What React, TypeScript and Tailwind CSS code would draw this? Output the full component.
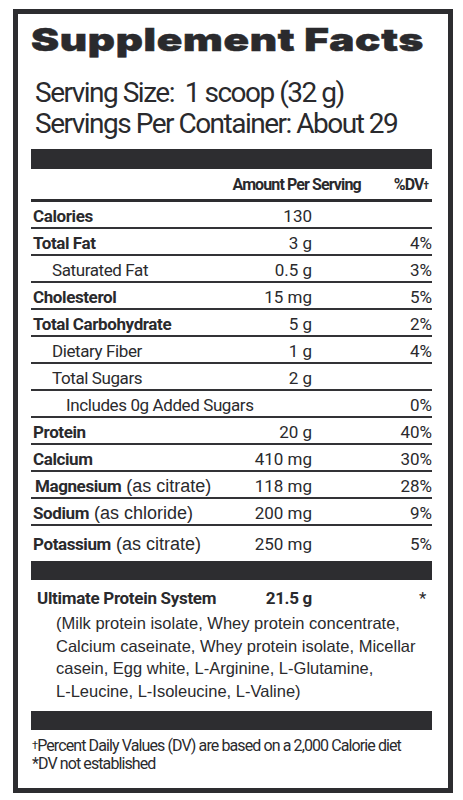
import React from "react";

interface Row {
  label: string;
  note?: string;
  bold?: boolean;
  indent: string;
  amount: string;
  dv: string;
}

const ROWS: Row[] = [
  { label: "Calories", bold: true, indent: "pl-[2px]", amount: "130", dv: "" },
  { label: "Total Fat", bold: true, indent: "pl-[2px]", amount: "3 g", dv: "4%" },
  { label: "Saturated Fat", indent: "pl-[21px]", amount: "0.5 g", dv: "3%" },
  { label: "Cholesterol", bold: true, indent: "pl-[2px]", amount: "15 mg", dv: "5%" },
  { label: "Total Carbohydrate", bold: true, indent: "pl-[2px]", amount: "5 g", dv: "2%" },
  { label: "Dietary Fiber", indent: "pl-[21px]", amount: "1 g", dv: "4%" },
  { label: "Total Sugars", indent: "pl-[21px]", amount: "2 g", dv: "" },
  { label: "Includes 0g Added Sugars", indent: "pl-[35px]", amount: "", dv: "0%" },
  { label: "Protein", bold: true, indent: "pl-[2px]", amount: "20 g", dv: "40%" },
  { label: "Calcium", bold: true, indent: "pl-[2px]", amount: "410 mg", dv: "30%" },
  { label: "Magnesium", note: "(as citrate)", bold: true, indent: "pl-[4px]", amount: "118 mg", dv: "28%" },
  { label: "Sodium", note: "(as chloride)", bold: true, indent: "pl-[2px]", amount: "200 mg", dv: "9%" },
  { label: "Potassium", note: "(as citrate)", bold: true, indent: "pl-[2px]", amount: "250 mg", dv: "5%" },
];

const App: React.FC = () => {
  return (
    <div className="min-h-screen bg-white pt-[9px] pl-[13px] text-[#2a2a2d] font-['Roboto',sans-serif]">
      <div className="w-[440px] h-[784px] border-[5px] border-[#2d2d30] pl-[13px] pr-[16px]">
        {/* heading */}
        <h1 className="mt-[10px] text-[31px] leading-none font-black tracking-[0.5px] font-['Inter',sans-serif] whitespace-nowrap">
          <span className="inline-block origin-left scale-x-[1.36] [-webkit-text-stroke:0.5px_#2a2a2d]">
            Supplement Facts
          </span>
        </h1>
        <div className="mt-[22px] pl-[4px] text-[28px] leading-[31px] tracking-[-1.5px] whitespace-pre">
          <div>Serving Size:  1 scoop (32 g)</div>
          <div>Servings Per Container: About 29</div>
        </div>

        <div className="mt-[10px] h-[20px] bg-[#2d2d30]" />

        {/* column header */}
        <div className="h-[33px] flex items-end justify-end gap-[33px] pr-[4px] pb-[6px] border-b-[3px] border-[#2d2d30] text-[16px] leading-none font-bold tracking-[-0.9px]">
          <span>Amount Per Serving</span>
          <span>
            %DV<sup className="text-[10px] relative -top-[1px]">†</sup>
          </span>
        </div>

        {/* nutrient rows */}
        {ROWS.map((r, i) => {
          const last = i === ROWS.length - 1;
          return (
            <div
              key={r.label}
              className={
                last
                  ? "grid grid-cols-[minmax(0,1fr)_90px_120px] items-end h-[35px] pb-[8px] text-[17px] leading-none"
                  : "grid grid-cols-[minmax(0,1fr)_90px_120px] items-end h-[27px] pb-[2px] border-b-2 border-[#333336] text-[17px] leading-none"
              }
            >
              <div className={`${r.indent} whitespace-nowrap tracking-[-0.4px]`}>
                <span className={r.bold ? "font-bold" : ""}>{r.label}</span>
                {r.note && (
                  <span className="font-['Liberation_Sans',sans-serif] text-[18px] tracking-normal"> {r.note}</span>
                )}
              </div>
              <div className="text-right">{r.amount}</div>
              <div className="text-right">{r.dv}</div>
            </div>
          );
        })}

        <div className="h-[19px] bg-[#2d2d30]" />

        {/* protein blend */}
        <div className="mt-[10px] grid grid-cols-[minmax(0,1fr)_90px_120px] items-start text-[17px] leading-none font-bold tracking-[-0.3px]">
          <div className="pl-[6px]">Ultimate Protein System</div>
          <div className="text-right">21.5 g</div>
          <div className="text-right pr-[6px] font-normal">*</div>
        </div>
        <p className="mt-[5px] pl-[25px] text-[16.5px] leading-[22.5px] font-['Liberation_Sans',sans-serif] whitespace-nowrap">
          (Milk protein isolate, Whey protein concentrate,
          <br />
          Calcium caseinate, Whey protein isolate, Micellar
          <br />
          casein, Egg white, L-Arginine, L-Glutamine,
          <br />
          L-Leucine, L-Isoleucine, L-Valine)
        </p>

        <div className="mt-[9px] h-[19px] bg-[#2d2d30]" />

        {/* footnotes */}
        <div className="mt-[7px] pl-[1px] text-[16px] leading-[18px] tracking-[-0.9px] whitespace-nowrap">
          <div>
            <sup className="text-[11px] relative -top-[2px]">†</sup>Percent Daily Values (DV) are based on a 2,000 Calorie diet
          </div>
          <div>*DV not established</div>
        </div>
      </div>
    </div>
  );
};

export default App;
